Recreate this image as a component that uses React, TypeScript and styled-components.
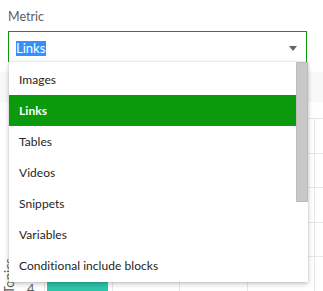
import styled, { createGlobalStyle } from 'styled-components'

const GlobalStyle = createGlobalStyle`
  html, body {
    margin: 0;
    padding: 0;
    background: #ffffff;
  }
  body {
    font-family: Lato, 'Open Sans', sans-serif;
  }
`

const options = ['Images', 'Links', 'Tables', 'Videos', 'Snippets', 'Variables', 'Conditional include blocks']

export default function App() {
  const selected = 'Links'
  return (
    <Page>
      <GlobalStyle />
      <Field>
        <Label>Metric</Label>
        <SelectBox>
          <Value>{selected}</Value>
          <Caret />
          <Menu>
            <List>
              {options.map((o) => (
                <Item key={o} $active={o === selected}>{o}</Item>
              ))}
            </List>
            <Scroll>
              <Thumb />
            </Scroll>
          </Menu>
        </SelectBox>
      </Field>
      <Band />
      <Chart>
        <AxisTitle>Topics</AxisTitle>
        <Tick>4</Tick>
        <Plot>
          {[0, 1, 2, 3, 4].map((i) => <HLine key={i} />)}
          <Columns>
            {[0, 1, 2, 3].map((i) => <VCell key={i} />)}
          </Columns>
          <Bar />
        </Plot>
      </Chart>
    </Page>
  )
}

const Page = styled.div`
  position: relative;
  width: 323px;
  height: 291px;
  overflow: hidden;
`

const Field = styled.div`
  position: relative;
  z-index: 2;
  padding: 9px 16px 0 8px;
  display: flex;
  flex-direction: column;
`

const Label = styled.div`
  font-size: 12.5px;
  line-height: 16px;
  color: #605e5c;
  height: 22px;
`

const SelectBox = styled.div`
  position: relative;
  height: 30px;
  border: 1px solid #0b9a0b;
  border-bottom: none;
  display: flex;
  align-items: center;
  padding-left: 7px;
`

const Value = styled.span`
  background: #3390ff;
  color: #ffffff;
  font-size: 13px;
  line-height: 15px;
  padding: 0 1px 0 0;
  margin-top: 2px;
`

const Caret = styled.span`
  position: absolute;
  right: 9px;
  top: 14px;
  width: 0;
  height: 0;
  border-left: 4.5px solid transparent;
  border-right: 4.5px solid transparent;
  border-top: 5px solid #666666;
`

const Menu = styled.div`
  position: absolute;
  top: 30px;
  left: 0px;
  width: 299px;
  height: 220px;
  background: #ffffff;
  box-shadow: 0 2px 5px rgba(0, 0, 0, 0.22), 0 0 2px rgba(0, 0, 0, 0.12);
  display: flex;
`

const List = styled.div`
  flex: 1;
  padding-top: 2px;
  display: flex;
  flex-direction: column;
`

const Item = styled.div<{ $active?: boolean }>`
  height: 31px;
  display: flex;
  align-items: center;
  padding-left: 10px;
  font-size: 12px;
  letter-spacing: 0.05px;
  color: ${(p) => (p.$active ? '#ffffff' : '#252423')};
  background: ${(p) => (p.$active ? '#0a9a0b' : 'transparent')};
  font-weight: ${(p) => (p.$active ? 700 : 400)};
`

const Scroll = styled.div`
  width: 12px;
  display: flex;
  flex-direction: column;
`

const Thumb = styled.div`
  height: 140px;
  background: #c8c8c8;
  border: 1px solid #bdbdbd;
  box-sizing: border-box;
`

const Band = styled.div`
  position: absolute;
  left: 0;
  right: 0;
  top: 72px;
  height: 30px;
  background: #f8f8f8;
`

const Chart = styled.div`
  position: absolute;
  left: 0;
  right: 0;
  top: 118px;
  bottom: 0;
`

const AxisTitle = styled.div`
  position: absolute;
  left: 2px;
  bottom: -3px;
  writing-mode: vertical-rl;
  transform: rotate(180deg);
  font-size: 13px;
  line-height: 14px;
  color: #605e5c;
  white-space: nowrap;
`

const Tick = styled.div`
  position: absolute;
  left: 27px;
  bottom: -6px;
  font-size: 13px;
  color: #605e5c;
`

const Plot = styled.div`
  position: absolute;
  left: 44px;
  right: 0;
  top: 0;
  bottom: 0;
  border-left: 1px solid #e6e6e6;
  display: flex;
  flex-direction: column;
`

const HLine = styled.div`
  height: 34.6px;
  border-top: 1px solid #e8e8e8;
  flex-shrink: 0;
  box-sizing: border-box;
`

const Columns = styled.div`
  position: absolute;
  inset: 0;
  display: flex;
`

const VCell = styled.div`
  width: 67.5px;
  flex-shrink: 0;
  border-right: 1px solid #e6e6e6;
  box-sizing: border-box;
`

const Bar = styled.div`
  position: absolute;
  left: 2px;
  width: 61px;
  top: 160px;
  bottom: 0;
  background: #2ec4a9;
`
